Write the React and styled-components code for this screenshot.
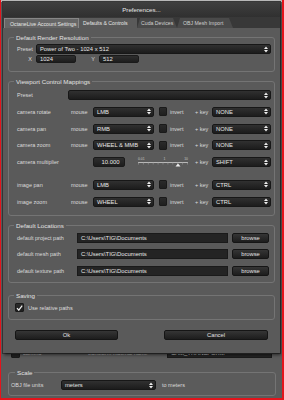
import React from 'react';
import styled, { createGlobalStyle } from 'styled-components';

const GlobalStyle = createGlobalStyle`
  html, body { margin: 0; padding: 0; background: #5a5a5a; }
  body { font-family: "Liberation Sans", Arial, sans-serif; }
  *, *::before, *::after { box-sizing: border-box; }
`;

const Screen = styled.div`
  position: relative;
  width: 284px;
  height: 400px;
  overflow: hidden;
  background: #5b5b5b;
  border-left: 1px solid #e3141c;
  border-right: 2px solid #e3141c;
  border-bottom: 2px solid #e3141c;
  display: flex;
  flex-direction: column;
  padding: 0 6px 2px 7px;
`;

const TopStrip = styled.div`
  height: 2px;
  margin: 0 -6px 0 -7px;
  background: #b9b9b9;
`;

const BgRow = styled.div`
  margin-top: auto;
  height: 10px;
  display: flex;
  align-items: center;
  padding-left: 3px;
  font-size: 5.5px;
  color: #d0d0d0;
`;

const BgText = styled.span`
  width: ${p => p.w}px;
  flex: none;
  white-space: nowrap;
`;

const Group = styled.fieldset`
  margin: ${p => p.mt || 0}px 0 0 0;
  padding: ${p => p.pt || 4}px ${p => p.pr || 3}px ${p => p.pb || 6}px ${p => p.pl || 8}px;
  border: 1px solid #747474;
  border-radius: 3px;
  min-width: 0;
  display: flex;
  flex-direction: column;
  gap: ${p => p.gap || 0}px;
`;

const Legend = styled.legend`
  margin-left: ${p => p.ml || -3}px;
  padding: 0 2px;
  font-size: 6.2px;
  line-height: 7px;
  color: #e2e2e2;
`;

const Dialog = styled.div`
  position: absolute;
  left: 2px;
  top: 2px;
  width: 277px;
  height: 351px;
  background: #5a5a5a;
  box-shadow: 1px 2px 3px rgba(0, 0, 0, 0.55), 0 0 0 1px #3a3a3a;
  display: flex;
  flex-direction: column;
`;

const TitleBar = styled.div`
  height: 15px;
  background: linear-gradient(#3f3f3f, #303030);
  color: #e8e8e8;
  font-size: 6.2px;
  line-height: 15px;
  text-align: center;
`;

const TabBar = styled.div`
  height: 11px;
  background: #383838;
  display: flex;
  align-items: flex-end;
  padding-left: 1px;
`;

const Tab = styled.div`
  width: ${p => p.w}px;
  height: 10px;
  flex: none;
  white-space: nowrap;
  font-size: 5.2px;
  line-height: 10px;
  padding-left: ${p => p.pl || 4}px;
  color: ${p => (p.dim ? '#cfcfcf' : '#e6e6e6')};
  background: ${p => p.bg};
  border: ${p => (p.outline ? '1px solid #878787' : 'none')};
  border-bottom: none;
  clip-path: ${p => (p.slant ? 'polygon(0 100%, 3px 0, calc(100% - 4px) 0, 100% 100%)' : 'none')};
`;

const Body = styled.div`
  padding: 6px 5px 0 5px;
  display: flex;
  flex-direction: column;
`;

const Row = styled.div`
  display: flex;
  align-items: center;
  height: ${p => p.h || 10}px;
  flex: none;
  margin-top: ${p => p.mt || 0}px;
`;

const Label = styled.span`
  width: ${p => p.w}px;
  flex: none;
  font-size: 5.5px;
  color: #dadada;
  white-space: nowrap;
  text-align: ${p => (p.right ? 'right' : 'left')};
  padding-right: ${p => (p.right ? 4 : 0)}px;
`;

const SelectBox = styled.div`
  height: 10px;
  width: ${p => (p.w ? `${p.w}px` : 'auto')};
  flex: ${p => (p.w ? 'none' : '1')};
  background: linear-gradient(#303030, #1c1c1c);
  border: 1px solid #171717;
  border-radius: 2px;
  color: #e6e6e6;
  font-size: 5.8px;
  padding: 0 2px 0 3px;
  display: flex;
  align-items: center;
  justify-content: space-between;
  white-space: nowrap;
`;

const Field = styled.div`
  height: ${p => p.h || 10}px;
  width: ${p => p.w}px;
  flex: none;
  background: ${p => (p.flat ? '#242424' : 'linear-gradient(#2e2e2e, #1d1d1d)')};
  border: 1px solid #1a1a1a;
  border-radius: ${p => (p.flat ? 0 : 2)}px;
  color: #e6e6e6;
  font-size: 5.9px;
  line-height: ${p => (p.h || 10) - 2}px;
  padding-left: 3px;
  text-align: ${p => (p.center ? 'center' : 'left')};
  white-space: nowrap;
  overflow: hidden;
`;

const Button = styled.div`
  height: 10px;
  width: ${p => p.w}px;
  flex: none;
  margin-left: ${p => p.ml || 0}px;
  background: linear-gradient(#353535, #1d1d1d);
  border: 1px solid #151515;
  border-radius: 2px;
  color: #e2e2e2;
  font-size: 5.8px;
  line-height: 8px;
  text-align: center;
`;

const Check = styled.div`
  width: ${p => p.w || 9}px;
  height: 9px;
  flex: none;
  margin: 0 ${p => p.mr || 3}px 0 ${p => p.ml || 0}px;
  background: linear-gradient(#2a2a2a, #1f1f1f);
  border: 1px solid #1a1a1a;
  border-radius: 1px;
  display: flex;
  align-items: center;
  justify-content: center;
`;

const CheckText = styled.span`
  font-size: 5.6px;
  color: #dedede;
`;

const SliderWrap = styled.div`
  width: 70px;
  flex: none;
  padding-left: 13px;
  display: flex;
`;

const Slider = styled.div`
  width: 50px;
  display: flex;
  flex-direction: column;
`;

const Scale = styled.div`
  display: flex;
  justify-content: space-between;
  font-size: 3.4px;
  line-height: 4px;
  color: #c4c4c4;
`;

const ButtonRow = styled.div`
  display: flex;
  justify-content: space-between;
  padding: 0 7px;
  margin-top: 10px;
`;

const Arrows = () => (
  <svg width="4" height="7" viewBox="0 0 4 7">
    <polygon points="0,3 2,0.4 4,3" fill="#eeeeee" />
    <polygon points="0,4 2,6.6 4,4" fill="#eeeeee" />
  </svg>
);

const Select = ({ w, children }) => (
  <SelectBox w={w}>
    <span>{children}</span>
    <Arrows />
  </SelectBox>
);

const Tick = () => (
  <svg width="7" height="6" viewBox="0 0 7 6">
    <path d="M1 3.2 L2.8 5.2 L6.2 0.6" stroke="#f2f2f2" strokeWidth="1.2" fill="none" />
  </svg>
);

const MapRow = ({ label, mouse, keyName, mt }) => (
  <Row mt={mt}>
    <Label w={54}>{label}</Label>
    <Label w={22}>mouse</Label>
    <Select w={61}>{mouse}</Select>
    <Check w={8} ml={5} mr={3} />
    <Label w={25}>invert</Label>
    <Label w={17}>+ key</Label>
    <Select>{keyName}</Select>
  </Row>
);

const PathRow = ({ label }) => (
  <Row>
    <Label w={60}>{label}</Label>
    <Field w={151} flat>C:\Users\TIG\Documents</Field>
    <Button w={37} ml={4}>browse</Button>
  </Row>
);

export default function App() {
  return (
    <>
      <GlobalStyle />
      <Screen>
        <TopStrip />
        <BgRow>
          <Check ml={0} mr={3} />
          <BgText w={65}>camera</BgText>
          <BgText w={79}>transform material name</BgText>
          <Field w={105} flat>CAM_TRANSFORM</Field>
        </BgRow>
        <Group mt={11} pt={0} pb={5} pl={2} pr={3}>
          <Legend ml={4}>Scale</Legend>
          <Row>
            <Label w={50}>OBJ file units</Label>
            <Select w={95}>meters</Select>
            <Label w={40} style={{ marginLeft: 6 }}>to meters</Label>
          </Row>
        </Group>

        <Dialog>
          <TitleBar>Preferences...</TitleBar>
          <TabBar>
            <Tab w={75} bg="#666666" outline pl={5}>OctaneLive Account Settings</Tab>
            <Tab w={58} bg="#5a5a5a">Defaults &amp; Controls</Tab>
            <Tab w={40} bg="#4a4a4a" slant dim>Cuda Devices</Tab>
            <Tab w={56} bg="#4a4a4a" slant dim pl={6}>OBJ Mesh Import</Tab>
          </TabBar>
          <Body>
            <Group pt={3} pb={8} gap={1}>
              <Legend>Default Render Resolution</Legend>
              <Row>
                <Label w={19}>Preset</Label>
                <Select>Power of Two - 1024 x 512</Select>
              </Row>
              <Row h={8}>
                <Label w={19} right>X</Label>
                <Field w={40} h={8}>1024</Field>
                <Label w={23} right>Y</Label>
                <Field w={40} h={8}>512</Field>
              </Row>
            </Group>

            <Group mt={6} pt={5} pb={8} gap={6.75}>
              <Legend>Viewport Control Mappings</Legend>
              <Row>
                <Label w={51}>Preset</Label>
                <Select> </Select>
              </Row>
              <MapRow label="camera rotate" mouse="LMB" keyName="NONE" />
              <MapRow label="camera pan" mouse="RMB" keyName="NONE" />
              <MapRow label="camera zoom" mouse="WHEEL & MMB" keyName="NONE" />
              <Row>
                <Label w={54}>camera multiplier</Label>
                <Label w={22} />
                <Field w={32} center>10.000</Field>
                <SliderWrap>
                  <Slider>
                    <Scale>
                      <span>0.01</span>
                      <span>1</span>
                      <span>10</span>
                    </Scale>
                    <svg width="50" height="6" viewBox="0 0 50 6">
                      <line x1="0" y1="1.5" x2="50" y2="1.5" stroke="#b8b8b8" strokeWidth="1" />
                      {Array.from({ length: 11 }).map((_, i) => (
                        <line key={i} x1={i * 4.9 + 0.5} y1="1.5" x2={i * 4.9 + 0.5} y2="3.5" stroke="#9a9a9a" strokeWidth="0.6" />
                      ))}
                      <polygon points="37.5,5.5 40,2.5 42.5,5.5" fill="#f0f0f0" />
                    </svg>
                  </Slider>
                </SliderWrap>
                <Label w={17}>+ key</Label>
                <Select>SHIFT</Select>
              </Row>
              <MapRow label="image pan" mouse="LMB" keyName="CTRL" mt={6} />
              <MapRow label="image zoom" mouse="WHEEL" keyName="CTRL" />
            </Group>

            <Group mt={6} pt={4} pb={6} gap={6.5}>
              <Legend>Default Locations</Legend>
              <PathRow label="default project path" />
              <PathRow label="default mesh path" />
              <PathRow label="default texture path" />
            </Group>

            <Group mt={9} pt={4} pb={6} pl={6}>
              <Legend ml={-1}>Saving</Legend>
              <Row>
                <Check ml={0} mr={4}>
                  <Tick />
                </Check>
                <CheckText>Use relative paths</CheckText>
              </Row>
            </Group>

            <ButtonRow>
              <Button w={103}>Ok</Button>
              <Button w={104}>Cancel</Button>
            </ButtonRow>
          </Body>
        </Dialog>
      </Screen>
    </>
  );
}
